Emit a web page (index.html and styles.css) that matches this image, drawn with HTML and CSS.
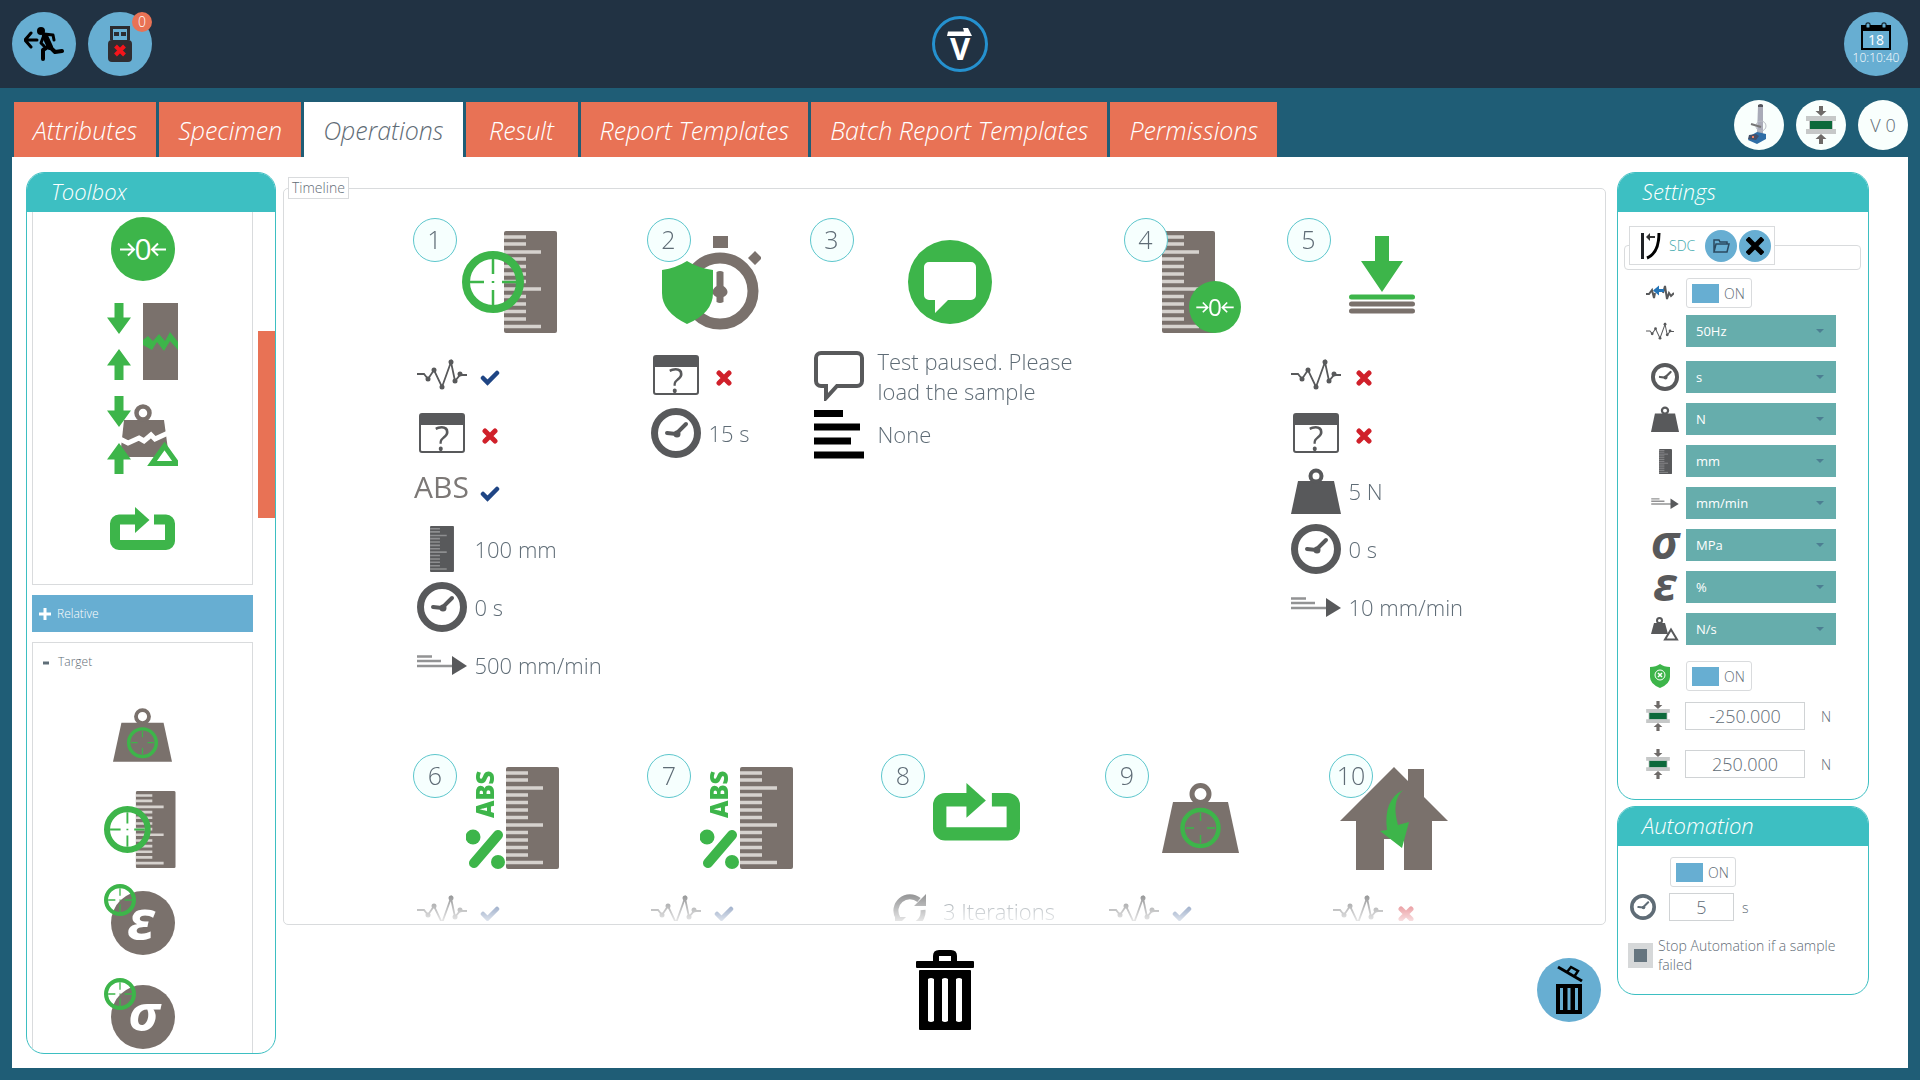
FILE: index.html
```html
<!DOCTYPE html>
<html lang="en">
<head>
<meta charset="utf-8">
<title>Test Method - Operations</title>
<link rel="stylesheet" href="styles.css">
</head>
<body>
<svg class="sprite" aria-hidden="true">
  <symbol id="ruler" viewBox="0 0 53 102"><rect width="53" height="102" rx="2" fill="currentColor"/><path class="ruler-ticks" d="M0 6h22M0 13h22M0 21h37M0 28h22M0 35.500h22M0 43h22M0 50.500h22M0 58h37M0 65.500h22M0 73h22M0 80.500h22M0 88h22M0 95.500h37" stroke-width="3.500"/></symbol>
  <symbol id="target" viewBox="0 0 62 62"><circle cx="31" cy="31" r="27" fill="none" stroke="#3db54a" stroke-width="8"/><path d="M31 8v15M31 39v15M8 31h14M40 31h14M31 30v2" stroke="#3db54a" stroke-width="2.500"/></symbol>
  <symbol id="zero" viewBox="0 0 64 64"><circle cx="32" cy="32" r="32" fill="#3db54a"/><path d="M9 32.500h13M17 26.500l6 6l-6 6M55 32.500H42M47 26.500l-6 6l6 6" stroke="#fff" stroke-width="2" fill="none"/><text x="32" y="43" font-size="30" font-weight="400" text-anchor="middle" fill="#fff">0</text></symbol>
  <symbol id="target-ruler" viewBox="0 0 102 102"><use href="#ruler" x="42" width="53" height="102" color="#7a716c"/><use href="#target" x="0" y="20" width="62" height="62"/></symbol>
  <symbol id="weight-target" viewBox="0 0 77 70"><path d="M11 19h55l11 51H0z" fill="#7a716c"/><circle cx="38.500" cy="11" r="8.500" fill="#fff" stroke="#7a716c" stroke-width="5"/><circle cx="38.500" cy="45" r="18" fill="none" stroke="#3db54a" stroke-width="4.500"/><path d="M38.500 30v8M38.500 52v8M24 45h8M45 45h8" stroke="#3db54a" stroke-width="1.500"/></symbol>
  <symbol id="arrow-down" viewBox="0 0 24 31"><path d="M7.500 0h9v14.500H24L12 31L0 14.500h7.500z" fill="#3db54a"/></symbol>
  <symbol id="arrow-up" viewBox="0 0 24 31"><path d="M7.500 31h9V16.500H24L12 0L0 16.500h7.500z" fill="#3db54a"/></symbol>
  <symbol id="break-sample" viewBox="0 0 71 77"><use href="#arrow-down" width="24" height="31"/><use href="#arrow-up" y="46" width="24" height="31"/><path d="M36 0h35v77H36z" fill="#7a716c"/><path d="M36 37l5-4l5 5l6-7l6 7l5-9l8 10v8l-8-9l-6 10l-7-9l-5 8l-9-5z" fill="#3db54a"/></symbol>
  <symbol id="break-force" viewBox="0 0 71 78"><path d="M17 24h40l5 37H13z" fill="#7a716c"/><circle cx="36" cy="17" r="6.500" fill="#fff" stroke="#7a716c" stroke-width="4.500"/><path d="M11 42l10 5l11-5l5 3l7-6l4 4l13-6" stroke="#fff" stroke-width="5" fill="none"/><use href="#arrow-down" width="24" height="31"/><use href="#arrow-up" y="47" width="24" height="31"/><path d="M57.500 50l12.500 17.500H45z" fill="#fff" stroke="#3db54a" stroke-width="5"/></symbol>
  <symbol id="loop" viewBox="0 0 65 44"><path d="M30 12.500H9a4 4 0 0 0-4 4V34a4 4 0 0 0 4 4h47a4 4 0 0 0 4-4V16.500a4 4 0 0 0-4-4H44" fill="none" stroke="#3db54a" stroke-width="10"/><path d="M25 0v26l14.500-13z" fill="#3db54a"/></symbol>
  <symbol id="strain" viewBox="0 0 78 78"><circle cx="39" cy="39" r="32" fill="#7a716c"/><text x="37" y="55" font-size="54" font-weight="700" font-style="italic" text-anchor="middle" fill="#fff">ε</text><use href="#target" width="32" height="32"/></symbol>
  <symbol id="stress" viewBox="0 0 78 78"><circle cx="39" cy="39" r="32" fill="#7a716c"/><text x="40" y="53" font-size="51" font-weight="700" font-style="italic" text-anchor="middle" fill="#fff">σ</text><use href="#target" width="32" height="32"/></symbol>
  <symbol id="safe-hold" viewBox="0 0 99 96"><circle cx="58" cy="57" r="33" fill="#fff" stroke="#7a716c" stroke-width="11"/><path d="M51 2h15v12H51zM93 17l7 7l-7 7l-7-7z" fill="#7a716c"/><path d="M54.500 38q3.500-2 7 0v14q4 3 4 6t-4 5v5q-3.500 2-7 0v-5q-4-2-4-5t4-6z" fill="#7a716c"/><path d="M0 36q14-2 25-9q11 7 26 9v23q0 20-26 31Q0 78 0 59z" fill="#3db54a"/></symbol>
  <symbol id="message" viewBox="0 0 84 84"><circle cx="42" cy="42" r="42" fill="#3db54a"/><path d="M21 22h42a5 5 0 0 1 5 5v28a5 5 0 0 1-5 5H40L27 73V60h-6a5 5 0 0 1-5-5V27a5 5 0 0 1 5-5z" fill="#fff"/></symbol>
  <symbol id="ruler-zero" viewBox="0 0 79 102"><use href="#ruler" width="53" height="102" color="#7a716c"/><use href="#zero" x="27" y="50" width="52" height="52"/></symbol>
  <symbol id="preload" viewBox="0 0 66 92"><path d="M26 0h14v25h14L33 56L12 25h14z" fill="#3db54a"/><path d="M2.500 61h61" stroke="#3db54a" stroke-width="5" stroke-linecap="round"/><path d="M2.500 68h61M2.500 75h61" stroke="#7a716c" stroke-width="5" stroke-linecap="round"/></symbol>
  <symbol id="percent-ruler" viewBox="0 0 94 102"><use href="#ruler" x="40" width="53" height="102" color="#7a716c"/><text transform="translate(28 51) rotate(-90)" font-size="24" font-weight="800" fill="#3db54a">ABS</text><path d="M8 96L32 68" stroke="#3db54a" stroke-width="10" stroke-linecap="round"/><circle cx="7" cy="70" r="7.500" fill="#3db54a"/><circle cx="32" cy="95" r="7" fill="#3db54a"/></symbol>
  <symbol id="home" viewBox="0 0 108 103"><path d="M54 0l14 14V2h16v28l24 24H92v49H64V72H44v31H16V54H0z" fill="#7a716c"/><path d="M63 23Q51 34 58 58l11-3l-7 26l-22-17l7-1Q43 33 63 23z" fill="#3db54a"/></symbol>

  <symbol id="trace" viewBox="0 0 50 34"><path d="M0 16h7l4 5l6-9l8 17l9-25l4 19l5-6h7" fill="none" stroke="currentColor" stroke-width="1.800"/><g fill="currentColor"><circle cx="11" cy="21" r="2.500"/><circle cx="17" cy="12" r="2.500"/><circle cx="25" cy="29" r="2.500"/><circle cx="34" cy="4" r="2.500"/><circle cx="38" cy="23" r="2.500"/><circle cx="43" cy="16" r="2.500"/></g></symbol>
  <symbol id="query" viewBox="0 0 46 40"><rect x="1" y="1" width="44" height="38" rx="2" fill="#fff" stroke="currentColor" stroke-width="2"/><path d="M1 1h44v11H1z" fill="currentColor"/><text x="23" y="38" font-size="34" font-weight="400" text-anchor="middle" fill="currentColor">?</text></symbol>
  <symbol id="clock" viewBox="0 0 50 50"><circle cx="25" cy="25" r="21.500" fill="none" stroke="currentColor" stroke-width="7"/><path d="M16 25l9 1L35 16" fill="none" stroke="currentColor" stroke-width="4" stroke-linecap="round"/><circle cx="26" cy="26" r="3.500" fill="currentColor"/></symbol>
  <symbol id="weight" viewBox="0 0 50 46"><path d="M7 13h36l7 33H0z" fill="currentColor"/><circle cx="25" cy="8" r="5.500" fill="#fff" stroke="currentColor" stroke-width="4"/></symbol>
  <symbol id="speed" viewBox="0 0 50 20"><path d="M0 1.500h15M0 6h24M0 11h36" stroke="currentColor" stroke-width="2.500" opacity=".65"/><path d="M35 1v19l15-9z" fill="currentColor"/></symbol>
  <symbol id="bubble" viewBox="0 0 50 50"><path d="M7 2h36a5 5 0 0 1 5 5v23a5 5 0 0 1-5 5H23L12 47V35H7a5 5 0 0 1-5-5V7a5 5 0 0 1 5-5z" fill="#fff" stroke="currentColor" stroke-width="4"/></symbol>
  <symbol id="lines" viewBox="0 0 50 50"><path d="M0 4.500h29M0 18h46M0 32h37M0 46h50" stroke="#000" stroke-width="7"/></symbol>
  <symbol id="repeat" viewBox="0 0 34 34"><path d="M26 6A14 14 0 0 0 5 24M8 29A14 14 0 0 0 30 16" fill="none" stroke="currentColor" stroke-width="5"/><path d="M33 0v12H21zM2 34V23h11z" fill="currentColor"/></symbol>
  <symbol id="check" viewBox="0 0 20 16"><path d="M3 8l4.500 4.500L17 3" fill="none" stroke="#1f4584" stroke-width="4.500" stroke-linecap="round"/></symbol>
  <symbol id="cross" viewBox="0 0 16 16"><path d="M3 3l10 10M13 3L3 13" stroke="#d0202a" stroke-width="5" stroke-linecap="round"/></symbol>

  <symbol id="clamp" viewBox="0 0 30 38"><path d="M0 10h30v5H0zM0 23h30v5H0zM3 15v8h2v-8zM25 15v8h2v-8z" fill="#c6c8c8"/><path d="M4 15h22v8H4z" fill="#0d6a3b"/><path d="M13 0h4v5h3.500L15 10l-5.500-5H13zM13 38h4v-5h3.500L15 28l-5.500 5H13z" fill="#6e6a68"/></symbol>
  <symbol id="filter" viewBox="0 0 28 18"><path d="M0 10h3l3-4l2 8l1-5M17 9l2-7l2 13l2-6l2 3l3-3" fill="none" stroke="#58595b" stroke-width="2"/><path d="M7 6.500l6-5v3.500h5v3h-5v3.500z" fill="#2475b8"/></symbol>
  <symbol id="force-rate" viewBox="0 0 28 24"><path d="M3 6h11l3 11H0z" fill="#58595b"/><circle cx="8.500" cy="3.500" r="2.500" fill="#fff" stroke="#58595b" stroke-width="2"/><path d="M20 12.500l6 10H14z" fill="#fff" stroke="#58595b" stroke-width="2"/></symbol>
  <symbol id="shield" viewBox="0 0 20 24"><path d="M0 3q6 0 10-3q4 3 10 3v10q0 7-10 11Q0 20 0 13z" fill="#3db54a"/><circle cx="10" cy="11" r="5" fill="none" stroke="#fff"/><path d="M8 9l4 4M12 9l-4 4" stroke="#fff" stroke-width="1.500"/></symbol>
</svg>

<header class="topbar">
  <nav class="topbar__side">
    <button class="round-button" aria-label="Exit">
      <svg width="40" height="34" viewBox="0 0 40 34" fill="none" stroke="#000" stroke-linecap="round" stroke-linejoin="round"><circle cx="17" cy="4" r="4" fill="#000" stroke="none"/><path d="M20 7l9 1l1 5M20 8l-3 8l3 3" stroke-width="3"/><path d="M21 9l5 11" stroke-width="6"/><path d="M25 19l-6 4v9M26 20l5 5l7-1" stroke-width="4"/><path d="M1 13h12M7 6L1 13l6 7" stroke-width="3"/></svg>
    </button>
    <button class="round-button" aria-label="USB drive">
      <svg width="24" height="36" viewBox="0 0 24 36"><path d="M3.500 14V1.500h17V14" fill="none" stroke="#2b2b2f" stroke-width="3"/><path d="M6 6h5v4H6zM13 6h5v4h-5z" fill="#2b2b2f"/><rect y="14" width="24" height="22" rx="4" fill="#2f2d31"/><path d="M7.500 20l9 9M16.500 20l-9 9" stroke="#f5151b" stroke-width="4"/></svg>
      <span class="round-button__badge">0</span>
    </button>
  </nav>
  <svg class="topbar__logo" width="56" height="56" viewBox="0 0 56 56"><circle cx="28" cy="28" r="26.500" fill="none" stroke="#2591cf" stroke-width="3"/><path d="M16 15.500h16l-1-3.500h5l4 8H15z" fill="#fff"/><text x="28" y="44" font-size="31" font-weight="700" text-anchor="middle" fill="#fff">V</text></svg>
  <div class="topbar__side topbar__side--end">
    <button class="round-button round-button--date" aria-label="Date and time">
      <svg width="30" height="28" viewBox="0 0 30 28"><path d="M1 4h28v23H1z" fill="none" stroke="#000" stroke-width="2"/><path d="M0 3h30v6H0z"/><rect x="5" y="1" width="4" height="5" rx="1" fill="#67aed2" stroke="#000"/><rect x="21" y="1" width="4" height="5" rx="1" fill="#67aed2" stroke="#000"/><text x="15" y="23" font-size="14" font-weight="400" text-anchor="middle" fill="#fff">18</text></svg>
      <span>10:10:40</span>
    </button>
  </div>
</header>

<div class="tabbar">
  <nav class="tabs">
    <a class="tab" href="#attributes">Attributes</a>
    <a class="tab" href="#specimen">Specimen</a>
    <a class="tab tab--active" href="#operations" aria-current="page">Operations</a>
    <a class="tab" href="#result">Result</a>
    <a class="tab" href="#report">Report Templates</a>
    <a class="tab" href="#batch">Batch Report Templates</a>
    <a class="tab" href="#permissions">Permissions</a>
  </nav>
  <div class="status">
    <button class="status__item" aria-label="Test stand"><svg width="24" height="42" viewBox="0 0 24 42"><path d="M11 2q3-2 5 0v30l-6-2z" fill="#a9abb8"/><path d="M11 1q3-2 5 0v2h-5z" fill="#55565e"/><circle cx="14" cy="22" r="5" fill="none" stroke="#b9bcc4"/><path d="M4 20l10 3" stroke="#777" stroke-width="2"/><path d="M3 32l7-4l9 2v5l-9 5l-9-4z" fill="#2f6ea6"/><path d="M2 31l7-1l3 2l-3 4l-8-1z" fill="#44506a"/><path d="M5 32h2v2H5z" fill="#f08060"/></svg></button>
    <button class="status__item" aria-label="Force limits"><svg width="30" height="38"><use href="#clamp"/></svg></button>
    <button class="status__item">V 0</button>
  </div>
</div>

<main class="workspace">
  <section class="panel toolbox">
    <h2 class="panel__title">Toolbox</h2>
    <div class="toolbox__body">
      <div class="toolbox__list">
        <div class="tool-group tool-group--open">
          <button class="tool" aria-label="Zero"><svg width="64" height="64"><use href="#zero"/></svg></button>
          <button class="tool" aria-label="Break detection"><svg width="71" height="77"><use href="#break-sample"/></svg></button>
          <button class="tool" aria-label="Force drop"><svg class="tool__overflow" width="71" height="78"><use href="#break-force"/></svg></button>
          <button class="tool" aria-label="Loop"><svg width="65" height="44"><use href="#loop"/></svg></button>
        </div>
        <button class="tool-heading"><svg width="12" height="12" viewBox="0 0 12 12"><path d="M6 0v12M0 6h12" stroke="#fff" stroke-width="3"/></svg>Relative</button>
        <div class="tool-group">
          <button class="tool-heading tool-heading--open"><svg width="12" height="12" viewBox="0 0 12 12"><path d="M3 7h6" stroke="#5f6e78" stroke-width="3"/></svg>Target</button>
          <button class="tool" aria-label="Target force"><svg width="59" height="54"><use href="#weight-target"/></svg></button>
          <button class="tool" aria-label="Target displacement"><svg width="77" height="77"><use href="#target-ruler"/></svg></button>
          <button class="tool" aria-label="Target strain"><svg width="78" height="78"><use href="#strain"/></svg></button>
          <button class="tool" aria-label="Target stress"><svg width="78" height="78"><use href="#stress"/></svg></button>
        </div>
      </div>
      <div class="toolbox__thumb"></div>
    </div>
  </section>

  <section class="center">
    <fieldset class="timeline">
      <legend class="timeline__legend">Timeline</legend>
      <div class="timeline__view">
        <ol class="steps">
          <li class="step step--wide">
            <span class="step__number">1</span>
            <div class="step__icon"><svg width="102" height="102"><use href="#target-ruler"/></svg></div>
            <ul class="params">
              <li class="param"><span class="param__icon"><svg width="50" height="34"><use href="#trace"/></svg></span><span class="param__mark"><svg width="20" height="16"><use href="#check"/></svg></span></li>
              <li class="param"><span class="param__icon"><svg width="46" height="40"><use href="#query"/></svg></span><span class="param__mark"><svg width="16" height="16"><use href="#cross"/></svg></span></li>
              <li class="param"><span class="param__icon param__icon--text">ABS</span><span class="param__mark"><svg width="20" height="16"><use href="#check"/></svg></span></li>
              <li class="param"><span class="param__icon"><svg width="24" height="46"><use href="#ruler"/></svg></span><span>100 mm</span></li>
              <li class="param"><span class="param__icon"><svg width="50" height="50"><use href="#clock"/></svg></span><span>0 s</span></li>
              <li class="param"><span class="param__icon"><svg width="50" height="20"><use href="#speed"/></svg></span><span>500 mm/min</span></li>
            </ul>
          </li>
          <li class="step">
            <span class="step__number">2</span>
            <div class="step__icon"><svg width="99" height="96"><use href="#safe-hold"/></svg></div>
            <ul class="params">
              <li class="param"><span class="param__icon"><svg width="46" height="40"><use href="#query"/></svg></span><span class="param__mark"><svg width="16" height="16"><use href="#cross"/></svg></span></li>
              <li class="param"><span class="param__icon"><svg width="50" height="50"><use href="#clock"/></svg></span><span>15 s</span></li>
            </ul>
          </li>
          <li class="step step--message">
            <span class="step__number">3</span>
            <div class="step__icon"><svg width="84" height="84"><use href="#message"/></svg></div>
            <ul class="params">
              <li class="param"><span class="param__icon"><svg width="50" height="50"><use href="#bubble"/></svg></span><span>Test paused. Please load the sample</span></li>
              <li class="param"><span class="param__icon"><svg width="50" height="50"><use href="#lines"/></svg></span><span>None</span></li>
            </ul>
          </li>
          <li class="step">
            <span class="step__number">4</span>
            <div class="step__icon step__icon--end"><svg width="79" height="102"><use href="#ruler-zero"/></svg></div>
          </li>
          <li class="step step--medium">
            <span class="step__number">5</span>
            <div class="step__icon"><svg width="66" height="92"><use href="#preload"/></svg></div>
            <ul class="params">
              <li class="param"><span class="param__icon"><svg width="50" height="34"><use href="#trace"/></svg></span><span class="param__mark"><svg width="16" height="16"><use href="#cross"/></svg></span></li>
              <li class="param"><span class="param__icon"><svg width="46" height="40"><use href="#query"/></svg></span><span class="param__mark"><svg width="16" height="16"><use href="#cross"/></svg></span></li>
              <li class="param"><span class="param__icon"><svg width="50" height="46"><use href="#weight"/></svg></span><span>5 N</span></li>
              <li class="param"><span class="param__icon"><svg width="50" height="50"><use href="#clock"/></svg></span><span>0 s</span></li>
              <li class="param"><span class="param__icon"><svg width="50" height="20"><use href="#speed"/></svg></span><span>10 mm/min</span></li>
            </ul>
          </li>
        </ol>
        <ol class="steps steps--last" start="6">
          <li class="step step--wide">
            <span class="step__number">6</span>
            <div class="step__icon"><svg width="94" height="102"><use href="#percent-ruler"/></svg></div>
            <ul class="params"><li class="param"><span class="param__icon"><svg width="50" height="34"><use href="#trace"/></svg></span><span class="param__mark"><svg width="20" height="16"><use href="#check"/></svg></span></li></ul>
          </li>
          <li class="step step--wide">
            <span class="step__number">7</span>
            <div class="step__icon"><svg width="94" height="102"><use href="#percent-ruler"/></svg></div>
            <ul class="params"><li class="param"><span class="param__icon"><svg width="50" height="34"><use href="#trace"/></svg></span><span class="param__mark"><svg width="20" height="16"><use href="#check"/></svg></span></li></ul>
          </li>
          <li class="step step--medium">
            <span class="step__number">8</span>
            <div class="step__icon"><svg width="87" height="70" viewBox="0 0 87 70"><use href="#loop" width="87" height="59"/></svg></div>
            <ul class="params"><li class="param"><span class="param__icon"><svg width="34" height="34"><use href="#repeat"/></svg></span><span>3 Iterations</span></li></ul>
          </li>
          <li class="step step--medium">
            <span class="step__number">9</span>
            <div class="step__icon"><svg width="77" height="70"><use href="#weight-target"/></svg></div>
            <ul class="params"><li class="param"><span class="param__icon"><svg width="50" height="34"><use href="#trace"/></svg></span><span class="param__mark"><svg width="20" height="16"><use href="#check"/></svg></span></li></ul>
          </li>
          <li class="step">
            <span class="step__number">10</span>
            <div class="step__icon"><svg width="108" height="103"><use href="#home"/></svg></div>
            <ul class="params"><li class="param"><span class="param__icon"><svg width="50" height="34"><use href="#trace"/></svg></span><span class="param__mark"><svg width="16" height="16"><use href="#cross"/></svg></span></li></ul>
          </li>
        </ol>
      </div>
    </fieldset>
    <div class="actions">
      <svg class="actions__bin" width="58" height="80" viewBox="0 0 58 80"><path d="M20 13V6q0-3 3-3h12q3 0 3 3v7" fill="none" stroke="#000" stroke-width="6"/><rect y="11" width="58" height="7" rx="1"/><path d="M4 20h50q1 0 1 1v58q0 1-1 1H4q-1 0-1-1V21q0-1 1-1zM12 29v42q3 2 6 0V29q-3-2-6 0zM26 29v42q3 2 6 0V29q-3-2-6 0zM40 29v42q3 2 6 0V29q-3-2-6 0z" fill-rule="evenodd"/></svg>
      <button class="round-button actions__clear" aria-label="Delete all">
        <svg width="28" height="50" viewBox="0 0 28 50"><path d="M1 19h26v30H1zM5 23v22h3V23zM12.500 23v22h3V23zM20 23v22h3V23z" fill-rule="evenodd"/><path d="M3 2l24 14" stroke="#000" stroke-width="3"/><path d="M12 7l4-5l7 4l-4 6" fill="none" stroke="#000" stroke-width="2.500"/></svg>
      </button>
    </div>
  </section>

  <aside class="sidebar">
    <section class="panel">
      <h2 class="panel__title">Settings</h2>
      <form class="settings">
        <fieldset class="method">
          <legend class="method__legend">
            <svg width="20" height="28" viewBox="0 0 20 28"><path d="M1.500 1v26" stroke="#1f2226" stroke-width="3"/><path d="M18 1q0 20-12 25" fill="none" stroke="#000" stroke-width="3"/><path d="M14 5H8" stroke="#333" stroke-width="2"/><path d="M9 1v8L5 5z" fill="#333"/></svg>
            <span class="method__name">SDC</span>
            <span class="method__buttons">
              <button type="button" class="mini-button" aria-label="Open"><svg width="18" height="16" viewBox="0 0 18 16"><path d="M2 14V2h5l1 2h7v2M2 14L4 6h13l-2 8z" fill="none" stroke="#2b4a60" stroke-width="1.500"/></svg></button>
              <button type="button" class="mini-button" aria-label="Remove"><svg width="18" height="18" viewBox="0 0 18 18"><path d="M3 3l12 12M15 3L3 15" stroke="#000" stroke-width="5" stroke-linecap="square"/></svg></button>
            </span>
          </legend>
        </fieldset>
        <div class="setting"><span class="setting__icon"><svg width="28" height="18"><use href="#filter"/></svg></span><label class="toggle"><input class="toggle__box" type="checkbox" checked>ON</label></div>
        <div class="setting"><span class="setting__icon"><svg width="28" height="19"><use href="#trace"/></svg></span><span class="select"><select class="select__field" aria-label="Sample rate"><option>50Hz</option></select></span></div>
        <div class="units">
          <div class="setting setting--unit"><span class="setting__icon"><svg width="28" height="28"><use href="#clock"/></svg></span><span class="select"><select class="select__field" aria-label="Time unit"><option>s</option></select></span></div>
          <div class="setting setting--unit"><span class="setting__icon"><svg width="28" height="26"><use href="#weight"/></svg></span><span class="select"><select class="select__field" aria-label="Force unit"><option>N</option></select></span></div>
          <div class="setting setting--unit"><span class="setting__icon"><svg width="13" height="25"><use href="#ruler"/></svg></span><span class="select"><select class="select__field" aria-label="Displacement unit"><option>mm</option></select></span></div>
          <div class="setting setting--unit"><span class="setting__icon"><svg width="28" height="11"><use href="#speed"/></svg></span><span class="select"><select class="select__field" aria-label="Speed unit"><option>mm/min</option></select></span></div>
          <div class="setting setting--unit"><span class="setting__icon setting__icon--greek">σ</span><span class="select"><select class="select__field" aria-label="Stress unit"><option>MPa</option></select></span></div>
          <div class="setting setting--unit"><span class="setting__icon setting__icon--greek">ε</span><span class="select"><select class="select__field" aria-label="Strain unit"><option>%</option></select></span></div>
          <div class="setting setting--unit"><span class="setting__icon"><svg width="28" height="24"><use href="#force-rate"/></svg></span><span class="select"><select class="select__field" aria-label="Force rate unit"><option>N/s</option></select></span></div>
        </div>
        <div class="setting"><span class="setting__icon"><svg width="20" height="24"><use href="#shield"/></svg></span><label class="toggle"><input class="toggle__box" type="checkbox" checked>ON</label></div>
        <div class="limits">
          <div class="setting"><span class="setting__icon"><svg width="24" height="30"><use href="#clamp"/></svg></span><input class="number" id="lower" aria-label="Lower force limit" value="-250.000"><label for="lower">N</label></div>
          <div class="setting"><span class="setting__icon"><svg width="24" height="30"><use href="#clamp"/></svg></span><input class="number" id="upper" aria-label="Upper force limit" value="250.000"><label for="upper">N</label></div>
        </div>
      </form>
    </section>
    <section class="panel">
      <h2 class="panel__title">Automation</h2>
      <form class="automation">
        <label class="toggle automation__toggle"><input class="toggle__box" type="checkbox" checked>ON</label>
        <div class="automation__delay"><svg width="26" height="26"><use href="#clock"/></svg><input class="number number--short" id="delay" aria-label="Delay" value="5"><label for="delay">s</label></div>
        <label class="stop"><input class="stop__box" type="checkbox" checked><span>Stop Automation if a sample failed</span></label>
      </form>
    </section>
  </aside>
</main>
</body>
</html>
```

FILE: styles.css
```css
* { box-sizing: border-box; }

body {
  margin: 0;
  height: 100vh;
  display: flex;
  flex-direction: column;
  background: #1f5d76;
  color: #5f6c76;
  font-family: "Open Sans", "Noto Sans", sans-serif;
  font-size: 14px;
  font-weight: 300;
}

button, input, select { font: inherit; color: inherit; }
button { border: 0; padding: 0; background: none; cursor: pointer; }
ol, ul { list-style: none; margin: 0; padding: 0; }
svg { flex: none; display: block; }
.sprite { display: none; }
.ruler-ticks { stroke: var(--tick, #d6d2ce); }

/* Top bar */
.topbar {
  flex: none;
  height: 88px;
  padding: 0 12px;
  display: flex;
  align-items: center;
  background: #213243;
}
.topbar__side { flex: 1; display: flex; gap: 12px; }
.topbar__side--end { justify-content: flex-end; }
.round-button {
  position: relative;
  width: 64px;
  height: 64px;
  border-radius: 50%;
  background: #67aed2;
  display: flex;
  align-items: center;
  justify-content: center;
}
.round-button--date { flex-direction: column; color: #fff; font-size: 12px; line-height: 16px; }
.round-button__badge {
  position: absolute;
  top: 0;
  right: 0;
  width: 20px;
  height: 20px;
  border-radius: 50%;
  background: #e87255;
  color: #fff;
  line-height: 20px;
}

/* Tabs */
.tabbar {
  flex: none;
  height: 69px;
  padding: 0 12px 0 14px;
  display: flex;
  justify-content: space-between;
}
.tabs { display: flex; gap: 3px; align-self: flex-end; }
.tab {
  min-width: 112px;
  height: 55px;
  padding: 0 19px;
  background: #e87255;
  color: #fff;
  font-size: 25px;
  font-style: italic;
  line-height: 56px;
  text-align: center;
  text-decoration: none;
  white-space: nowrap;
}
.tab--active { background: #fff; color: #5f6c76; }
.status { display: flex; gap: 12px; padding-top: 12px; }
.status__item {
  width: 50px;
  height: 50px;
  border-radius: 50%;
  background: #f9fffd;
  font-size: 18px;
  display: flex;
  align-items: center;
  justify-content: center;
}

/* Workspace */
.workspace {
  flex: 1;
  min-height: 0;
  margin: 0 12px 12px;
  padding: 15px 39px 14px 14px;
  background: #fff;
  display: grid;
  grid-template-columns: 250px minmax(0, 1fr) 252px;
  grid-template-rows: minmax(0, 1fr);
}
.panel {
  border: 1px solid #3dbfc2;
  border-radius: 18px;
  overflow: hidden;
}
.panel__title {
  margin: 0;
  height: 39px;
  padding-left: 24px;
  background: #3dbfc2;
  color: #fff;
  font-size: 22px;
  font-weight: 300;
  font-style: italic;
  line-height: 37px;
}

/* Toolbox */
.toolbox { display: flex; flex-direction: column; }
.toolbox__body { position: relative; flex: 1; min-height: 0; overflow: hidden; padding: 0 22px 0 5px; }
.toolbox__list { display: flex; flex-direction: column; gap: 10px; }
.toolbox__thumb { position: absolute; top: 119px; right: 0; width: 17px; height: 187px; background: #e87255; }
.tool-group {
  padding-bottom: 16px;
  border: 1px solid #d9dbdd;
  display: flex;
  flex-direction: column;
  gap: 16px;
}
.tool-group--open { border-top: 0; }
.tool { height: 78px; display: flex; align-items: center; justify-content: center; }
.tool__overflow { overflow: visible; }
.tool-group--open .tool:first-child { height: 74px; }
.tool-heading {
  height: 37px;
  padding-left: 7px;
  display: flex;
  align-items: center;
  gap: 6px;
  background: #67aed2;
  color: #fff;
  font-size: 12px;
}
.tool-heading--open { background: none; color: #5f6c76; }

/* Timeline */
.center { display: flex; flex-direction: column; padding: 5px 11px 0 7px; }
.timeline {
  flex: 1;
  min-width: 0;
  min-height: 0;
  margin: 0;
  padding: 0 0 3px;
  border: 1px solid #d9dbdd;
  border-radius: 5px;
  display: flex;
}
.timeline__legend {
  margin-left: 4px;
  padding: 0 3px;
  border: 1px solid #d9dbdd;
  font-size: 14px;
  line-height: 20px;
}
.timeline__view {
  flex: 1;
  overflow: hidden;
  padding-top: 19px;
  -webkit-mask-image: linear-gradient(to top, rgba(0, 0, 0, .15), #000 46px);
  mask-image: linear-gradient(to top, rgba(0, 0, 0, .15), #000 46px);
}
.steps { height: 536px; display: flex; justify-content: center; gap: 34px; }
.steps--last { padding-right: 18px; }
.step { position: relative; width: 129px; }
.step--wide { width: 200px; }
.step--medium { width: 190px; }
.step--message { width: 280px; }
.step__number {
  position: absolute;
  top: 0;
  left: 0;
  width: 44px;
  height: 44px;
  border: 1px solid #5cc6cc;
  border-radius: 50%;
  background: #f6fffe;
  font-size: 25px;
  line-height: 41px;
  text-align: center;
}
.step__icon {
  height: 128px;
  display: flex;
  align-items: center;
  justify-content: center;
}
.step__icon--end { justify-content: flex-end; padding-right: 12px; }
.param {
  min-height: 58px;
  padding-left: 4px;
  display: flex;
  align-items: center;
  gap: 8px;
  font-size: 22px;
  line-height: 30px;
}
.step--message .param { min-height: 56px; gap: 14px; }
.param__icon {
  --tick: #8d8e90;
  flex: none;
  width: 50px;
  color: #58595b;
  display: flex;
  justify-content: center;
}
.param__icon--text { padding-bottom: 8px; font-size: 30px; font-weight: 400; color: #7c7876; }
.param__mark { width: 30px; padding-top: 6px; display: flex; justify-content: center; }

.actions {
  flex: none;
  height: 129px;
  padding: 0 5px;
  display: grid;
  grid-template-columns: 1fr auto 1fr;
  align-items: center;
}
.actions__bin { grid-column: 2; }
.actions__clear { justify-self: end; }

/* Settings */
.sidebar { display: flex; flex-direction: column; gap: 6px; }
.settings { padding: 14px 0 20px; }
.method {
  margin: 0 7px 8px 6px;
  padding: 0 0 4px;
  border: 1px solid #d9dbdd;
  border-radius: 4px;
}
.method__legend {
  margin-left: 4px;
  height: 39px;
  padding: 0 3px 0 11px;
  border: 1px solid #d9dbdd;
  display: flex;
  align-items: center;
}
.method__name { margin: 0 10px 0 8px; color: #3fa9ad; }
.method__buttons { display: flex; gap: 2px; }
.mini-button {
  width: 32px;
  height: 32px;
  border-radius: 50%;
  background: #67aed2;
  display: flex;
  align-items: center;
  justify-content: center;
}
.setting { padding-left: 28px; display: flex; align-items: center; gap: 12px; }
.setting--unit { padding-left: 33px; gap: 7px; }
.setting + .setting { margin-top: 7px; }
.setting__icon {
  --tick: #8d8e90;
  flex: none;
  width: 28px;
  color: #58595b;
  display: flex;
  justify-content: center;
}
.setting__icon--greek { padding-bottom: 8px; font-size: 46px; font-weight: 700; font-style: italic; line-height: 24px; }
.units { margin: 14px 0 16px; display: flex; flex-direction: column; gap: 10px; }
.units .setting { margin: 0; height: 32px; }
.limits { margin-top: 10px; display: flex; flex-direction: column; gap: 18px; }
.limits .setting { margin: 0; gap: 0; }
.limits .setting__icon { width: 39px; justify-content: flex-start; }
.limits label { margin-left: 16px; }
.toggle {
  height: 30px;
  width: 66px;
  padding-left: 5px;
  border: 1px solid #d9dbdd;
  border-radius: 3px;
  display: flex;
  align-items: center;
  gap: 5px;
}
.toggle__box { appearance: none; margin: 0; width: 27px; height: 19px; background: #67aed2; }
.select { position: relative; width: 150px; }
.select::after {
  content: "";
  position: absolute;
  right: 12px;
  top: 14px;
  border: 4px solid transparent;
  border-top-color: #4c7f92;
  border-bottom: 0;
}
.select__field {
  appearance: none;
  display: block;
  width: 100%;
  height: 32px;
  padding: 0 10px;
  border: 0;
  border-radius: 0;
  background: #66adac;
  color: #fff;
  font-size: 13px;
  font-weight: 400;
}
.number {
  width: 120px;
  height: 28px;
  padding: 0;
  border: 1px solid #d0d3d5;
  font-size: 18px;
  text-align: center;
}
.number--short { width: 65px; }

/* Automation */
.automation { padding: 11px 14px 20px 10px; }
.automation__toggle { margin-left: 42px; }
.automation__delay { margin: 6px 0 15px 2px; display: flex; align-items: center; gap: 8px; }
.automation__delay .number { margin-left: 5px; }
.stop { display: flex; align-items: center; gap: 5px; line-height: 19px; }
.stop__box {
  appearance: none;
  flex: none;
  margin: 0;
  width: 25px;
  height: 25px;
  border: 6px solid #d6d8d9;
  background: #66757f;
}
```
